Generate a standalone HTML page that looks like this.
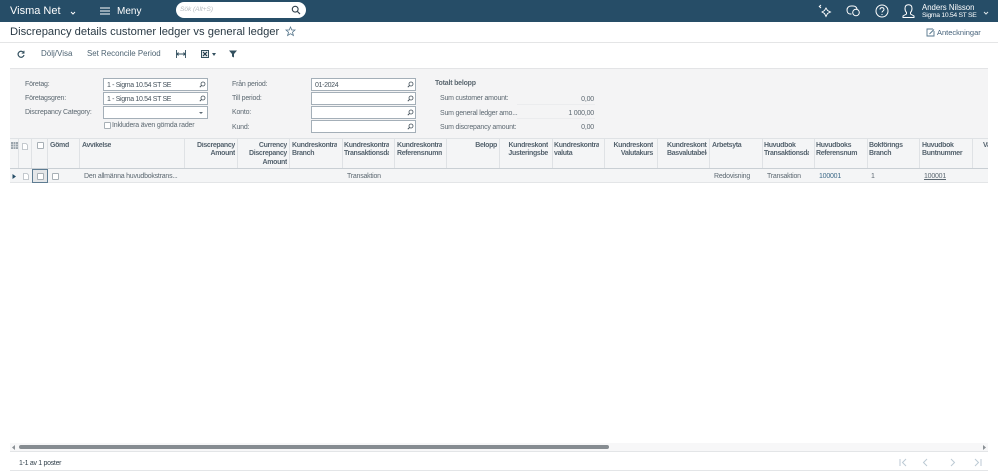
<!DOCTYPE html>
<html><head><meta charset="utf-8"><style>
html,body{margin:0;padding:0;width:998px;height:473px;overflow:hidden;background:#fff;font-family:"Liberation Sans",sans-serif;color:#3a4750}
div,span,svg{position:absolute;white-space:nowrap}
.t{font-size:7px;line-height:9px;color:#5c6871;letter-spacing:-.2px}
.h{font-size:7px;line-height:8.3px;font-weight:bold;color:#56646f;top:142px;overflow:hidden;letter-spacing:-.33px}
.r{text-align:right}
.v{position:absolute;top:139px;width:1px;height:29px;background:#dfe2e5}
.inp{background:#fff;border:1px solid #a4afb8;box-sizing:border-box;height:13px;width:105px}
.inp span{left:3px;top:2px;font-size:7px;line-height:9px;color:#46535d;letter-spacing:-.35px}
.cb{width:7px;height:7px;box-sizing:border-box;border:1px solid #a8b0b6;background:#fff;border-radius:1px}
.c{font-size:7px;line-height:9px;top:172px;color:#5c6871;letter-spacing:-.23px}
</style></head><body>
<div style="left:0;top:0;width:998px;height:22px;background:#264d67"></div>
<div style="left:10px;top:4px;font-size:11px;line-height:15px;color:#fff">Visma Net</div>
<svg style="left:70px;top:11px" width="6" height="4" viewBox="0 0 6 4"><path d="M1 1l2 2 2-2" fill="none" stroke="#fff" stroke-width="1"/></svg>
<svg style="left:100px;top:7px" width="10" height="8" viewBox="0 0 10 8"><path d="M0 1h10M0 4h10M0 7h10" stroke="#fff" stroke-width="1.1"/></svg>
<div style="left:117px;top:5px;font-size:10px;line-height:14px;color:#fff">Meny</div>
<div style="left:176px;top:2px;width:130px;height:16px;background:#fff;border-radius:8px"></div>
<div style="left:180px;top:5px;font-size:6.5px;line-height:10px;font-style:italic;color:#b4babf">Sök (Alt+S)</div>
<svg style="left:291px;top:5px" width="10" height="10" viewBox="0 0 10 10"><circle cx="4.2" cy="4.2" r="2.9" fill="none" stroke="#33424d" stroke-width="1.1"/><path d="M6.4 6.4L9 9" stroke="#33424d" stroke-width="1.2"/></svg>
<svg style="left:818px;top:4px" width="14" height="14" viewBox="0 0 14 14" fill="none" stroke="#fff" stroke-width=".9"><path d="M8 4l1.5 2.5L12.5 8 9.5 9.5 8 12.5 6.5 9.500 4 8l2.500-1.500z"/><path d="M1 2l2 2M3 1L1 3"/></svg>
<svg style="left:846px;top:5px" width="15" height="12" viewBox="0 0 15 12" fill="none" stroke="#fff" stroke-width="1"><path d="M5.500 9H4C2 9 1 7 1 5s1.500-4 4-4h2c2 0 3.500 1 4 3"/><circle cx="10" cy="7.500" r="3.300"/></svg>
<svg style="left:875px;top:4px" width="14" height="14" viewBox="0 0 14 14" fill="none" stroke="#fff" stroke-width="1"><circle cx="7" cy="7" r="6"/><path d="M5 5.500C5 3 9 3 9 5.500 9 7 7 7 7 8.500M7 10v1"/></svg>
<svg style="left:902px;top:4px" width="13" height="14" viewBox="0 0 13 14" fill="none" stroke="#fff" stroke-width="1"><path d="M1 13.500h11v-1.500L8.500 10V8.500C9.500 7.500 10 6 10 4.500 10 2 8.500.8 6.500.8S3 2 3 4.500C3 6 3.500 7.500 4.500 8.500V10L1 12z"/></svg>
<div style="left:922px;top:3px;font-size:7.800px;line-height:9px;color:#fff">Anders Nilsson</div>
<div style="left:922px;top:11px;font-size:6.800px;line-height:9px;color:#fff;letter-spacing:-.3px">Sigma 10.54 ST SE</div>
<svg style="left:983px;top:11px" width="6" height="4" viewBox="0 0 6 4"><path d="M1 1l2 2 2-2" fill="none" stroke="#dfe6ea" stroke-width="1"/></svg>

<div style="left:0;top:22px;width:998px;height:20px;background:#fff;border-bottom:1px solid #e4e5e6"></div>
<div style="left:10px;top:25px;font-size:11.200px;line-height:14px;color:#2a3a45">Discrepancy details customer ledger vs general ledger</div>
<svg style="left:285px;top:26px" width="11" height="11" viewBox="0 0 11 11"><path d="M5.500 1l1.300 3h3.200L7.500 6.200l.9 3.300-2.900-1.800-2.900 1.800.9-3.300L1 4h3.200z" fill="none" stroke="#54748a" stroke-width=".8"/></svg>
<svg style="left:926px;top:28px" width="9" height="9" viewBox="0 0 9 9" fill="none" stroke="#55758c" stroke-width=".9"><path d="M7 1H1v7h7V3M3.500 6L8 1.500"/></svg>
<div style="left:937px;top:28px;font-size:7.500px;line-height:10px;color:#46627a">Anteckningar</div>

<div style="left:0;top:43px;width:998px;height:25px;background:#fff"></div>
<svg style="left:17px;top:50px" width="8" height="8" viewBox="0 0 8 8" fill="none" stroke="#33505f" stroke-width="1.200"><path d="M6.800 3A3 3 0 1 0 7 5"/><path d="M7 .8V3.200H4.700" stroke-width=".9"/></svg>
<div style="left:41px;top:49px;font-size:8px;line-height:10px;color:#4e6473">Dölj/Visa</div>
<div style="left:87px;top:49px;font-size:7.900px;line-height:10px;color:#4e6473">Set Reconcile Period</div>
<svg style="left:176px;top:50px" width="10" height="8" viewBox="0 0 10 8"><path d="M.5 0v8M9.500 0v8M1 4h8M2.500 2.500L1 4l1.500 1.500M7.500 2.500L9 4 7.500 5.500" fill="none" stroke="#33505f" stroke-width=".9"/></svg>
<svg style="left:201px;top:50px" width="8" height="8" viewBox="0 0 8 8"><rect x=".5" y=".5" width="7" height="7" fill="#e8ecef" stroke="#33505f"/><path d="M2 2l4 4M6 2L2 6" stroke="#1f3848" stroke-width="1.200"/></svg>
<svg style="left:212px;top:53px" width="4" height="3" viewBox="0 0 4 3"><path d="M0 0h4L2 3z" fill="#33505f"/></svg>
<svg style="left:229px;top:50px" width="8" height="8" viewBox="0 0 8 8"><path d="M0 .5h8L5 4v3.500L3 6.500V4z" fill="#33505f"/></svg>

<div style="left:10px;top:68px;width:978px;height:70px;background:#f4f4f5;border-top:1px solid #e3e4e6;box-sizing:border-box"></div>
<div class="t" style="left:25px;top:80px">Företag:</div>
<div class="t" style="left:25px;top:94px">Företagsgren:</div>
<div class="t" style="left:25px;top:108px">Discrepancy Category:</div>
<div class="inp" style="left:103px;top:78px"><span>1 - Sigma 10.54 ST SE</span></div>
<div class="inp" style="left:103px;top:92px"><span>1 - Sigma 10.54 ST SE</span></div>
<div class="inp" style="left:103px;top:106px"></div>
<svg style="left:199px;top:112px" width="5" height="3" viewBox="0 0 5 3"><path d="M0 0h4L2 2z" fill="#5d6a74"/></svg>
<div class="cb" style="left:104px;top:122px"></div>
<div class="t" style="left:112px;top:121px">Inkludera även gömda rader</div>

<div class="t" style="left:232px;top:80px">Från period:</div>
<div class="t" style="left:232px;top:94px">Till period:</div>
<div class="t" style="left:232px;top:108px">Konto:</div>
<div class="t" style="left:232px;top:123px">Kund:</div>
<div class="inp" style="left:311px;top:78px"><span>01-2024</span></div>
<div class="inp" style="left:311px;top:92px"></div>
<div class="inp" style="left:311px;top:106px"></div>
<div class="inp" style="left:311px;top:120px"></div>

<svg style="left:199px;top:81px" width="7" height="7" viewBox="0 0 7 7"><circle cx="4" cy="3" r="2" fill="none" stroke="#45525c" stroke-width=".8"/><path d="M2.500 4.500L.8 6.200" stroke="#45525c"/></svg>
<svg style="left:199px;top:95px" width="7" height="7" viewBox="0 0 7 7"><circle cx="4" cy="3" r="2" fill="none" stroke="#45525c" stroke-width=".8"/><path d="M2.500 4.500L.8 6.200" stroke="#45525c"/></svg>
<svg style="left:407px;top:81px" width="7" height="7" viewBox="0 0 7 7"><circle cx="4" cy="3" r="2" fill="none" stroke="#45525c" stroke-width=".8"/><path d="M2.500 4.500L.8 6.200" stroke="#45525c"/></svg>
<svg style="left:407px;top:95px" width="7" height="7" viewBox="0 0 7 7"><circle cx="4" cy="3" r="2" fill="none" stroke="#45525c" stroke-width=".8"/><path d="M2.500 4.500L.8 6.200" stroke="#45525c"/></svg>
<svg style="left:407px;top:109px" width="7" height="7" viewBox="0 0 7 7"><circle cx="4" cy="3" r="2" fill="none" stroke="#45525c" stroke-width=".8"/><path d="M2.500 4.500L.8 6.200" stroke="#45525c"/></svg>
<svg style="left:407px;top:123px" width="7" height="7" viewBox="0 0 7 7"><circle cx="4" cy="3" r="2" fill="none" stroke="#45525c" stroke-width=".8"/><path d="M2.500 4.500L.8 6.200" stroke="#45525c"/></svg>

<div class="t" style="left:435px;top:79px;font-weight:bold">Totalt belopp</div>
<div class="t" style="left:440px;top:94px">Sum customer amount:</div>
<div class="t" style="left:440px;top:109px">Sum general ledger amo...</div>
<div class="t" style="left:440px;top:123px">Sum discrepancy amount:</div>
<div class="t r" style="left:554px;width:40px;top:95px">0,00</div>
<div class="t r" style="left:554px;width:40px;top:109px">1 000,00</div>
<div class="t r" style="left:554px;width:40px;top:123px">0,00</div>
<div style="left:517px;top:104px;width:78px;height:1px;background:#ebecee"></div>
<div style="left:517px;top:118px;width:78px;height:1px;background:#ebecee"></div>

<div style="left:10px;top:138px;width:978px;height:314px;background:#fff"></div>
<div style="left:10px;top:138px;width:978px;height:31px;background:#f4f5f6;border-top:1px solid #dfe2e5;border-bottom:1px solid #c9cfd4;box-sizing:border-box"></div>
<div style="left:10px;top:169px;width:978px;height:14px;background:#f4f5f6;border-bottom:1px solid #e3e5e7;box-sizing:border-box"></div>

<span class="v" style="left:18px"></span><span class="v" style="left:31px"></span><span class="v" style="left:47px"></span><span class="v" style="left:79px"></span><span class="v" style="left:184px"></span><span class="v" style="left:237px"></span><span class="v" style="left:289px"></span><span class="v" style="left:342px"></span><span class="v" style="left:394px"></span><span class="v" style="left:446px"></span><span class="v" style="left:499px"></span><span class="v" style="left:552px"></span><span class="v" style="left:604px"></span><span class="v" style="left:657px"></span><span class="v" style="left:709px"></span><span class="v" style="left:762px"></span><span class="v" style="left:814px"></span><span class="v" style="left:867px"></span><span class="v" style="left:919px"></span><span class="v" style="left:972px"></span>

<svg style="left:11px;top:142px" width="7" height="7" viewBox="0 0 7 7"><rect width="7" height="7" fill="#9aa4ac"/><path d="M0 2.500h7M0 4.800h7M2.300 0v7M4.600 0v7" stroke="#e8eaec" stroke-width=".6"/></svg>
<svg style="left:22px;top:143px" width="6" height="7" viewBox="0 0 6 7"><path d="M.5.500h3.500L5.500 2v4.500H.5z" fill="#fff" stroke="#b4bbc1" stroke-width=".8"/></svg>
<div class="cb" style="left:37px;top:142px"></div>
<div class="h" style="left:50px">Gömd</div>
<div class="h" style="left:82px">Avvikelse</div>
<div class="h r" style="left:186px;width:49px">Discrepancy<br>Amount</div>
<div class="h r" style="left:239px;width:48px">Currency<br>Discrepancy<br>Amount</div>
<div class="h" style="left:292px;width:45px">Kundreskontra<br>Branch</div>
<div class="h" style="left:344px;width:45px">Kundreskontra<br>Transaktionsdatum</div>
<div class="h" style="left:397px;width:45px">Kundreskontra<br>Referensnummer</div>
<div class="h r" style="left:449px;width:48px">Belopp</div>
<div class="h r" style="left:501px;width:47px">Kundreskont<br>Justeringsbe</div>
<div class="h" style="left:554px;width:45px">Kundreskontra<br>valuta</div>
<div class="h r" style="left:606px;width:47px">Kundreskont<br>Valutakurs</div>
<div class="h" style="left:667px;width:40px">Kundreskontra<br>Basvalutabelopp</div>
<div class="h" style="left:712px;width:46px">Arbetsyta</div>
<div class="h" style="left:764px;width:45px">Huvudbok<br>Transaktionsdatum</div>
<div class="h" style="left:816px;width:49px">Huvudboks<br>Referensnum</div>
<div class="h" style="left:869px;width:48px">Bokförings<br>Branch</div>
<div class="h" style="left:922px;width:48px">Huvudbok<br>Buntnummer</div>
<div class="h" style="left:983px;width:5px">Va</div>

<svg style="left:12px;top:174px" width="4" height="5" viewBox="0 0 4 5"><path d="M.5 0L4 2.500.5 5z" fill="#264d67"/></svg>
<svg style="left:23px;top:173px" width="6" height="7" viewBox="0 0 6 7"><path d="M.5.500h3.500L5.500 2v4.500H.5z" fill="#fff" stroke="#b4bbc1" stroke-width=".8"/></svg>
<div style="left:32px;top:169px;width:16px;height:14px;box-sizing:border-box;background:#e4e6e8;border:1px solid #5e7c92"></div>
<div class="cb" style="left:37px;top:173px"></div>
<div class="cb" style="left:52px;top:173px"></div>
<div class="c" style="left:84px">Den allmänna huvudbokstrans...</div>
<div class="c" style="left:347px">Transaktion</div>
<div class="c" style="left:714px">Redovisning</div>
<div class="c" style="left:767px">Transaktion</div>
<div class="c" style="left:819px;color:#3d6a88">100001</div>
<div class="c" style="left:871px">1</div>
<div class="c" style="left:924px;text-decoration:underline">100001</div>

<div style="left:10px;top:443px;width:978px;height:8px;background:#f7f7f8"></div>
<div style="left:19px;top:445px;width:590px;height:4px;background:#868c91;border-radius:2px"></div>
<svg style="left:12px;top:445px" width="3" height="5" viewBox="0 0 3 5"><path d="M3 0v5L0 2.500z" fill="#8a9095"/></svg>
<svg style="left:983px;top:445px" width="3" height="5" viewBox="0 0 3 5"><path d="M0 0v5l3-2.500z" fill="#8a9095"/></svg>
<div style="left:10px;top:451px;width:978px;height:1px;background:#e3e5e7"></div>
<div style="left:10px;top:452px;width:978px;height:18px;background:#fff;border-bottom:1px solid #e3e5e7"></div>
<div style="left:19px;top:459px;font-size:7px;line-height:9px;color:#33424d;letter-spacing:-.3px">1-1 av 1 poster</div>
<svg style="left:899px;top:458px" width="8" height="9" viewBox="0 0 8 9" fill="none" stroke="#bccad4" stroke-width="1"><path d="M1 1v7M7 1L3.500 4.500 7 8"/></svg>
<svg style="left:922px;top:458px" width="6" height="9" viewBox="0 0 6 9" fill="none" stroke="#bccad4" stroke-width="1"><path d="M5 1L1.500 4.500 5 8"/></svg>
<svg style="left:950px;top:458px" width="6" height="9" viewBox="0 0 6 9" fill="none" stroke="#bccad4" stroke-width="1"><path d="M1 1l3.500 3.500L1 8"/></svg>
<svg style="left:974px;top:458px" width="8" height="9" viewBox="0 0 8 9" fill="none" stroke="#bccad4" stroke-width="1"><path d="M7 1v7M1 1l3.500 3.500L1 8"/></svg>
</body></html>
